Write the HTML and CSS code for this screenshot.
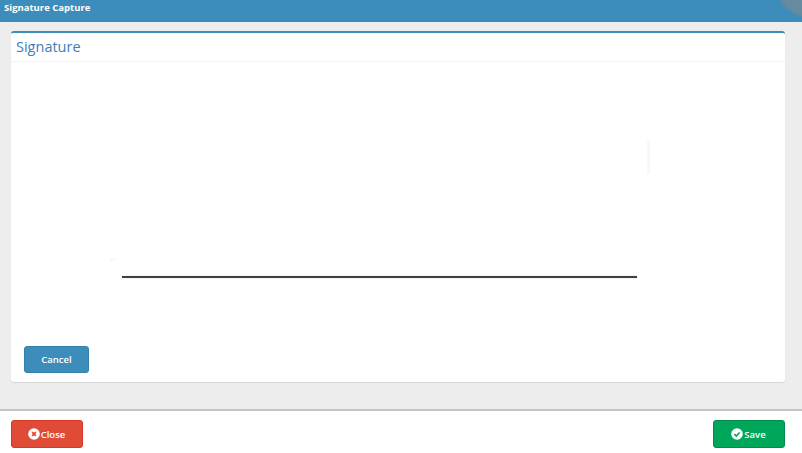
FILE: index.html
```html
<!DOCTYPE html>
<html lang="en">
  <head>
    <meta charset="UTF-8" />
    <title>Signature Capture</title>
    <link rel="stylesheet" href="styles.css">
  </head>
  <body>
    <header class="top-bar">
      <span class="top-title">Signature Capture</span>
      <span class="top-avatar"></span>
    </header>

    <main class="content">
      <section class="box">
        <h2 class="box-title">Signature</h2>
        <div class="box-body">
          <div class="pad">
            <span class="pad-speck"></span>
            <span class="pad-edge"></span>
            <div class="pad-line"></div>
          </div>
          <button class="btn btn-blue btn-cancel" type="button">Cancel</button>
        </div>
      </section>
    </main>

    <footer class="actions">
      <button class="btn btn-red" type="button">
        <svg class="btn-icon" viewBox="0 0 12 12">
          <circle cx="6" cy="6" r="5.8" fill="#fff" />
          <path d="M4.2 4.2l3.6 3.6M7.8 4.2l-3.6 3.6" stroke="#e04b37" stroke-width="1.9" fill="none" />
        </svg>
        Close
      </button>
      <button class="btn btn-green" type="button">
        <svg class="btn-icon" viewBox="0 0 12 12">
          <circle cx="6" cy="6" r="5.8" fill="#fff" />
          <path d="M3.4 6.1l1.9 1.9 3.4-3.5" stroke="#00a65a" stroke-width="1.6" fill="none" />
        </svg>
        Save
      </button>
    </footer>
  </body>
</html>
```

FILE: styles.css
```css
html,
body {
  height: 100%;
}

body {
  margin: 0;
  display: flex;
  flex-direction: column;
  overflow: hidden;
  font-family: "Open Sans", Arial, sans-serif;
  background-color: white;
}

.top-bar {
  position: relative;
  height: 22px;
  flex: none;
  overflow: hidden;
  padding-left: 4px;
  background-color: #3c8dbc;
  color: white;
  font-size: 9.5px;
  font-weight: 700;
  line-height: 16px;
}

.top-avatar {
  position: absolute;
  top: -57px;
  left: 775px;
  width: 74px;
  height: 74px;
  border-radius: 50%;
  background-color: #668a9f;
  box-shadow: 0 0 4px #668a9f;
}

.content {
  flex: 1;
  padding: 9px 17px 27px 11px;
  background-color: #ededed;
}

.box {
  display: flex;
  flex-direction: column;
  height: 100%;
  box-sizing: border-box;
  border-top: 2px solid #3c8dbc;
  border-radius: 3px;
  background-color: white;
  box-shadow: 0 1px 1px rgba(0, 0, 0, 0.1);
}

.box-title {
  margin: 0;
  height: 28px;
  padding-left: 5px;
  border-bottom: 1px solid #f4f4f4;
  color: #3c7fb5;
  font-size: 14.5px;
  font-weight: 400;
  line-height: 27px;
}

.box-body {
  flex: 1;
  display: flex;
  flex-direction: column;
  align-items: flex-start;
  padding: 0 13px 9px;
}

.pad {
  position: relative;
  flex: 1;
  align-self: stretch;
}

.pad-line {
  position: absolute;
  top: 214px;
  left: 98px;
  width: 515px;
  height: 2px;
  background-color: #404040;
  box-shadow: 0 0 1px #8a8a8a;
}

.pad-speck {
  position: absolute;
  top: 196px;
  left: 86px;
  width: 6px;
  height: 3px;
  background-color: #f8f8f8;
}

.pad-edge {
  position: absolute;
  top: 78px;
  left: 623px;
  width: 3px;
  height: 34px;
  background-color: #f8f8f8;
}

.btn {
  display: inline-flex;
  align-items: center;
  justify-content: center;
  gap: 1px;
  height: 28px;
  padding: 0 1px 0 0;
  border: 1px solid transparent;
  border-radius: 3px;
  color: white;
  font-family: inherit;
  font-size: 9.5px;
  font-weight: 600;
  cursor: pointer;
}

.btn-icon {
  width: 12px;
  height: 12px;
}

.btn-cancel {
  width: 65px;
  height: 27px;
  padding: 0;
}

.btn-blue {
  background-color: #3c8dbc;
  border-color: #367fa9;
}

.btn-red {
  width: 72px;
  background-color: #e04b37;
  border-color: #d73925;
}

.btn-green {
  width: 72px;
  background-color: #00a65a;
  border-color: #008d4c;
}

.actions {
  flex: none;
  display: flex;
  justify-content: space-between;
  box-sizing: border-box;
  height: 44px;
  padding: 9px 17px 0 11px;
  border-top: 2px solid #c4c4c4;
  background-color: white;
}
```
